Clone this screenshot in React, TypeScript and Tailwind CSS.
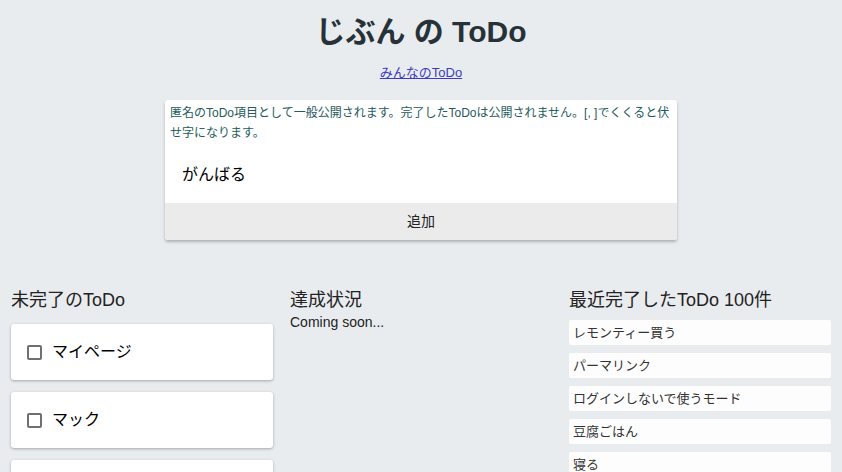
import React, { useState } from 'react';

const FONT = "font-['Liberation_Sans','Noto_Sans_CJK_JP',sans-serif]";

const pending = ['マイページ', 'マック', 'メール'];
const recent = ['レモンティー買う', 'パーマリンク', 'ログインしないで使うモード', '豆腐ごはん', '寝る', '洗濯'];

const App: React.FC = () => {
  const [text, setText] = useState('がんばる');

  return (
    <div className={`${FONT} min-h-screen bg-[#e9ecef] text-[#222] overflow-hidden`}>
      {/* ヘッダー */}
      <h1 className="pt-[14px] text-center text-[30px] leading-[36px] font-bold text-[#263238]">じぶん の ToDo</h1>
      <div className="mt-[14px] text-center text-[13px] leading-[18px]">
        <a href="#" className="text-[#3d3bc0] underline">みんなのToDo</a>
      </div>

      {/* 入力カード */}
      <div className="mx-auto mt-[18px] w-[512px] bg-white rounded-[3px] shadow-[0_2px_3px_rgba(0,0,0,0.25)] overflow-hidden">
        <p className="px-[5px] pt-[3px] text-[12px] leading-[20px] text-[#255a5c]">
          匿名のToDo項目として一般公開されます。完了したToDoは公開されません。[, ]でくくると伏せ字になります。
        </p>
        <div className="h-[60px] flex items-center pt-[4px]">
          <input
            value={text}
            onChange={(e) => setText(e.target.value)}
            className="w-full pl-[17px] pr-[10px] text-[16px] text-black bg-transparent outline-none"
          />
        </div>
        <button className="block w-full h-[37px] bg-[#ebebeb] text-[14px] text-[#222]">追加</button>
      </div>

      {/* 3カラム */}
      <div className="mt-[48px] px-[11px] grid grid-cols-3 gap-[17px]">
        <div>
          <h2 className="text-[18px] leading-[24px] text-[#222]">未完了のToDo</h2>
          <div className="mt-[12px] flex flex-col gap-[12px]">
            {pending.map((t) => (
              <label key={t} className="h-[56px] flex items-center px-[16px] bg-white rounded-[3px] shadow-[0_1px_3px_rgba(0,0,0,0.3)]">
                <span className="w-[15px] h-[15px] border-2 border-[#707070] rounded-[2px]" />
                <span className="ml-[10px] text-[16px] text-black">{t}</span>
              </label>
            ))}
          </div>
        </div>

        <div>
          <h2 className="text-[18px] leading-[24px] text-[#222]">達成状況</h2>
          <p className="mt-[2px] text-[14px] leading-[16px] text-[#222]">Coming soon...</p>
        </div>

        <div>
          <h2 className="text-[18px] leading-[24px] text-[#222]">最近完了したToDo 100件</h2>
          <ul className="mt-[8px] flex flex-col gap-[8px]">
            {recent.map((t) => (
              <li key={t} className="h-[25px] flex items-center px-[4px] bg-[#fdfdfd] rounded-[2px] text-[13px] text-[#333]">
                {t}
              </li>
            ))}
          </ul>
        </div>
      </div>
    </div>
  );
};

export default App;
